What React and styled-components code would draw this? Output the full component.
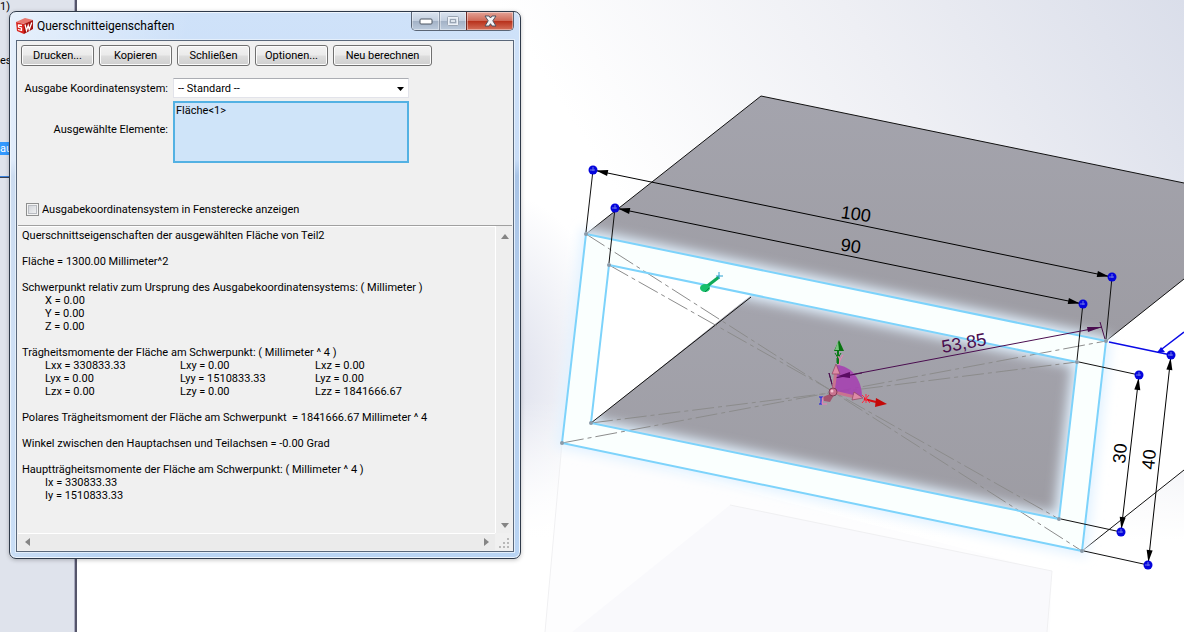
import React from 'react';
import styled, { createGlobalStyle } from 'styled-components';

const GlobalStyle = createGlobalStyle`
  * {
    box-sizing: border-box;
  }
  body {
    margin: 0;
    overflow: hidden;
    font-family: Roboto, 'DejaVu Sans Condensed', sans-serif;
    font-size: 11px;
    line-height: 13px;
    color: #000;
  }
`;

const toolbarButtons = [
  { label: 'Drucken...' },
  { label: 'Kopieren' },
  { label: 'Schließen' },
  { label: 'Optionen...' },
  { label: 'Neu berechnen', wide: true },
];

const inertia = [
  ['Lxx = 330833.33', 'Lxy = 0.00', 'Lxz = 0.00'],
  ['Lyx = 0.00', 'Lyy = 1510833.33', 'Lyz = 0.00'],
  ['Lzx = 0.00', 'Lzy = 0.00', 'Lzz = 1841666.67'],
];

export default function App() {
  return (
    <Desktop>
      <GlobalStyle />
      <TreePanel>
        <TreeItem>1)</TreeItem>
        <TreeItem>es</TreeItem>
        <TreeItem $selected>au</TreeItem>
        <TreeSplit />
      </TreePanel>
      <Viewport>
        <Scene />
      </Viewport>
      <PropertiesWindow />
    </Desktop>
  );
}

function PropertiesWindow() {
  return (
    <Window>
      <TitleBar>
        <Logo />
        <Title>Querschnitteigenschaften</Title>
        <WindowButtons>
          <WindowButton aria-label="Minimieren">
            <svg width="14" height="7" viewBox="0 0 14 7">
              <rect x="1" y="1" width="12" height="5" rx="1" fill="#fff" stroke="#4d5763" />
            </svg>
          </WindowButton>
          <WindowButton aria-label="Maximieren">
            <svg width="12" height="10" viewBox="0 0 12 10">
              <rect x="1.5" y="1.5" width="9" height="7" fill="none" stroke="#eef2f7" strokeWidth="2" />
              <rect x=".5" y=".5" width="11" height="9" rx="1" fill="none" stroke="#9aa5b3" />
              <rect x="3.5" y="3.5" width="5" height="3" fill="#dde4ec" stroke="#9aa5b3" />
            </svg>
          </WindowButton>
          <WindowButton $close aria-label="Fenster schließen">
            <svg width="13" height="12" viewBox="0 0 13 12">
              <path
                d="M1 1h4l1.500 2L8 1h4L8.800 5.800 12 11H8L6.500 8.700 5 11H1l3.200-5.200z"
                fill="#f4f4f6"
                stroke="#4e5360"
                strokeLinejoin="round"
              />
            </svg>
          </WindowButton>
        </WindowButtons>
      </TitleBar>
      <Client>
        <Toolbar>
          {toolbarButtons.map((b) => (
            <ToolButton key={b.label} $wide={b.wide}>
              {b.label}
            </ToolButton>
          ))}
        </Toolbar>
        <Form>
          <FieldLabel htmlFor="csys">Ausgabe Koordinatensystem:</FieldLabel>
          <SelectBox>
            <select id="csys">
              <option>-- Standard --</option>
            </select>
            <svg width="7" height="4" viewBox="0 0 7 4">
              <path d="M0 0h7L3.500 4z" />
            </svg>
          </SelectBox>
          <FieldLabel $tall htmlFor="selection">
            Ausgewählte Elemente:
          </FieldLabel>
          <SelectionBox id="selection" readOnly value="Fläche<1>" />
        </Form>
        <CheckRow>
          <input type="checkbox" />
          Ausgabekoordinatensystem in Fensterecke anzeigen
        </CheckRow>
        <ResultPane>
          <Results />
          <ScrollBar $vertical>
            <Arrow label="Nach oben" points="0,7 4,2 8,7" />
            <Arrow label="Nach unten" points="0,2 8,2 4,7" />
          </ScrollBar>
          <ScrollBar>
            <Arrow label="Nach links" points="6,0 6,8 1,4" />
            <Arrow label="Nach rechts" points="2,0 2,8 7,4" />
          </ScrollBar>
          <Grip viewBox="0 0 12 12">
            <path d="M9 1h2M5 5h2M9 5h2M1 9h2M5 9h2M9 9h2" stroke="#b9b9b9" strokeWidth="2" />
          </Grip>
        </ResultPane>
      </Client>
    </Window>
  );
}

function Results() {
  return (
    <ResultText>
      <p>Querschnittseigenschaften der ausgewählten Fläche von Teil2</p>
      <p>Fläche = 1300.00 Millimeter^2</p>
      <div>
        Schwerpunkt relativ zum Ursprung des Ausgabekoordinatensystems: ( Millimeter )
        <Values>
          <li>X = 0.00</li>
          <li>Y = 0.00</li>
          <li>Z = 0.00</li>
        </Values>
      </div>
      <div>
        Trägheitsmomente der Fläche am Schwerpunkt: ( Millimeter ^ 4 )
        <Tensor>
          <tbody>
            {inertia.map((row) => (
              <tr key={row[0]}>
                {row.map((cell) => (
                  <td key={cell}>{cell}</td>
                ))}
              </tr>
            ))}
          </tbody>
        </Tensor>
      </div>
      <p>Polares Trägheitsmoment der Fläche am Schwerpunkt&nbsp; = 1841666.67 Millimeter ^ 4</p>
      <p>Winkel zwischen den Hauptachsen und Teilachsen = -0.00 Grad</p>
      <div>
        Hauptträgheitsmomente der Fläche am Schwerpunkt: ( Millimeter ^ 4 )
        <Values>
          <li>Ix = 330833.33</li>
          <li>Iy = 1510833.33</li>
        </Values>
      </div>
    </ResultText>
  );
}

function Arrow({ label, points }) {
  return (
    <ArrowButton aria-label={label}>
      <svg width="8" height="8" viewBox="0 0 8 8">
        <polygon points={points} fill="#858585" />
      </svg>
    </ArrowButton>
  );
}

function Logo() {
  return (
    <svg width="17" height="16" viewBox="0 0 17 16">
      <path d="M0 4L9 0l8 2-8 4z" fill="#e8776e" />
      <path d="M0 4l8 2v10l-7-3z" fill="#d8221c" />
      <path d="M8 6l9-4v9l-9 5z" fill="#a5120f" />
      <path d="M6 7.500L2.500 7v2l3 1v2.500L2 11.500" fill="none" stroke="#fff" strokeWidth="1.300" />
      <path d="M9 6.500l1.500 6 1.700-5 1 4 2.600-7" fill="none" stroke="#fff" strokeWidth="1.300" />
    </svg>
  );
}

// Bemaßungslinie mit Pfeilspitzen und blauen Griffpunkten
function Dimension({ from, to }) {
  const [x1, y1] = from;
  const [x2, y2] = to;
  const angle = (Math.atan2(y2 - y1, x2 - x1) * 180) / Math.PI;
  return (
    <g>
      <line x1={x1} y1={y1} x2={x2} y2={y2} stroke="#000" />
      <path d="M3 0l12-3v6z" transform={`translate(${x1} ${y1}) rotate(${angle})`} />
      <path d="M3 0l12-3v6z" transform={`translate(${x2} ${y2}) rotate(${angle + 180})`} />
      <Handle x={x1} y={y1} />
      <Handle x={x2} y={y2} />
    </g>
  );
}

function Handle({ x, y }) {
  return (
    <g transform={`translate(${x} ${y})`}>
      <circle r="4.500" fill="#0505dc" />
      <path d="M-3 0h5M0-3v4" stroke="#6f78e8" />
    </g>
  );
}

function Scene() {
  const outer = '586,234 1106,341 1082,551 562,443';
  const inner = '609,265 1077,362 1059,519 591,423';
  const ring = 'M586 234L1106 341 1082 551 562 443zM609 265L591 423 1059 519 1077 362z';
  return (
    <SceneSvg viewBox="77 0 1107 632" preserveAspectRatio="xMinYMin slice">
      <defs>
        <linearGradient id="sky" x1="0.450" y1="0.200" x2="1" y2="0">
          <stop offset="0" stopColor="#fff" />
          <stop offset="0.500" stopColor="#eeeff4" />
          <stop offset="1" stopColor="#dadeea" />
        </linearGradient>
        <radialGradient id="haze">
          <stop offset="0" stopColor="#d9dcea" />
          <stop offset="1" stopColor="#d9dcea" stopOpacity="0" />
        </radialGradient>
        <linearGradient id="floor" x1="0" y1="0" x2="0" y2="1">
          <stop offset="0" stopColor="#fff" stopOpacity="0" />
          <stop offset="1" stopColor="#fff" />
        </linearGradient>
        <linearGradient id="top" x1="0" y1="0" x2="0" y2="1">
          <stop offset="0" stopColor="#a4a4ad" />
          <stop offset="1" stopColor="#9d9ca3" />
        </linearGradient>
        <filter id="glow" x="-10%" y="-10%" width="120%" height="120%">
          <feGaussianBlur stdDeviation="6" />
        </filter>
      </defs>

      <rect x="77" width="1107" height="632" fill="url(#sky)" />
      <ellipse cx="490" cy="380" rx="130" ry="190" fill="url(#haze)" />
      <rect x="77" y="400" width="1107" height="140" fill="url(#floor)" />
      <rect x="77" y="540" width="1107" height="92" fill="#fff" />

      <path d="M562 443L545 632h505l2-60z" fill="#fdfdfe" />
      <path d="M730 505L1052 571 1047 632H572z" fill="#f9f9fc" />
      <path d="M562 443L545 632M730 505L1052 571 1047 632" fill="none" stroke="#f0f0f2" />

      <path d="M1106 341L1184 279V470L1082 551z" fill="#fff" />
      <path d="M761 96L1184 183V279L1106 341 586 234z" fill="url(#top)" />
      <path d="M586 234L761 96 1184 183M1184 279L1106 341M1082 551L1184 470" fill="none" stroke="#111" />

      <polygon points={inner} fill="#fff" />
      <path d="M751 295L1077 362 1059 519 591 423z" fill="url(#top)" />

      <path d={ring} fill="#e2f2ff" stroke="#e2f2ff" strokeWidth="10" fillRule="evenodd" filter="url(#glow)" />
      <path d={ring} fill="#fafffe" fillRule="evenodd" />
      <path d="M609 265L751 295 591 423z" fill="#fff" />
      <path d="M751 297L591 423" stroke="#111" />

      <g stroke="#8c8c8c" strokeDasharray="22 4 4 4">
        <line x1="586" y1="234" x2="1082" y2="551" />
        <line x1="562" y1="443" x2="1106" y2="341" />
        <line x1="609" y1="265" x2="1059" y2="519" />
        <line x1="591" y1="423" x2="1077" y2="362" />
      </g>
      <g fill="none" stroke="#7dd3fb" strokeWidth="2">
        <polygon points={outer} />
        <polygon points={inner} />
      </g>
      <g fill="#8b9aa8">
        {[...outer.split(' '), ...inner.split(' ')].map((p) => {
          const [x, y] = p.split(',');
          return <circle key={p} cx={x} cy={y} r="2" />;
        })}
      </g>

      <g stroke="#111">
        <path d="M593 170L586 232M615 208L609 263M1112 277L1106 339M1083 303L1077 360" />
        <path d="M1079 362L1139 375M1061 519L1121 532M1084 551L1148 565" />
      </g>
      <path d="M1109 342L1171 355M1158 352L1184 332" stroke="#0a0ae6" strokeWidth="1.500" />
      <path d="M1157 353l4-6 4 5z" fill="#0a0ae6" />
      <Dimension from={[593, 170]} to={[1112, 277]} />
      <Dimension from={[615, 208]} to={[1083, 304]} />
      <Dimension from={[1139, 375]} to={[1121, 532]} />
      <Dimension from={[1171, 355]} to={[1148, 565]} />

      <g stroke="#4a0d4f" fill="#4a0d4f">
        <path d="M834 378L1102 327M1100 322L1105 339M829 373L834 392" fill="none" />
        <path d="M1102 327l-15 0 1 5zM838 377l11-5 1 6z" stroke="none" />
      </g>

      <DimText transform="translate(855 220) rotate(8)">100</DimText>
      <DimText transform="translate(850 252) rotate(8)">90</DimText>
      <DimText $purple transform="translate(965 349) rotate(-10)">
        53,85
      </DimText>
      <DimText transform="translate(1126 454) rotate(-84)">30</DimText>
      <DimText transform="translate(1155 460) rotate(-84)">40</DimText>

      <g>
        <path d="M706 287L719 277" stroke="#0faa58" strokeWidth="3" />
        <path d="M716 276h7M719 272v7" stroke="#2a9fd0" />
        <ellipse cx="705" cy="288" rx="5" ry="4" fill="#17c06b" />
        <path d="M705 292l4-4" stroke="#0b8545" />
      </g>

      <Triad />
    </SceneSvg>
  );
}

function Triad() {
  return (
    <g>
      <path d="M833 393L837 365C851 366 862 379 862 397z" fill="#a63cb2" fillOpacity=".85" />
      <path d="M829 373L832 384M834 378L862 373" stroke="#4a0d4f" />
      <path d="M838 376l12-4v6z" fill="#5a0b62" />
      <path d="M838 364v-15" stroke="#0a7a18" strokeWidth="2" />
      <path d="M834 351l5-11 5 11z" fill="#07740f" />
      <path d="M838 341l-3 9h4z" fill="#7bc483" />
      <path d="M835 353l3 5 3-5M837 358v5" fill="none" stroke="#0a7a18" />
      <path d="M838 356l2 4 3-5M840 360l-1 5" fill="none" stroke="#f07fb4" />
      <path d="M864 399L876 402" stroke="#d60c12" strokeWidth="2" />
      <path d="M875 407l1-9 11 6z" fill="#c40808" />
      <path d="M862 395l8 8M869 395l-7 8M866 394v9" stroke="#ff2a40" />
      <path d="M833 392L836 371" stroke="#c9738f" strokeWidth="3" />
      <path d="M832 374l4-10 4 10z" fill="#dd8ba6" stroke="#8e4560" strokeWidth=".7" />
      <path d="M834 392L855 397" stroke="#c9738f" strokeWidth="3" />
      <path d="M852 400l2-8 9 6z" fill="#dd8ba6" stroke="#8e4560" strokeWidth=".7" />
      <path d="M832 393l-9 4 1 4 6 1 4-7z" fill="#a3536e" />
      <circle cx="833" cy="392" r="4" fill="#c9738f" stroke="#6f3149" strokeWidth=".8" />
      <circle cx="832" cy="391" r="1.500" fill="#f3c1d0" />
      <path d="M819 397h4M821 397v7M819 404h3" stroke="#1a1ae0" fill="none" />
      <path d="M823 397l-1 7h5" stroke="#f07fb4" fill="none" />
    </g>
  );
}

const Desktop = styled.main`
  position: relative;
  display: flex;
  min-height: 100vh;
  background: #fff;
`;

const TreePanel = styled.aside`
  display: flex;
  flex-direction: column;
  gap: 41px;
  width: 77px;
  background: #dfe3ec;
  border-right: 2px solid #55556a;
  box-shadow: inset -1px 0 #a9abc0;
`;

const TreeItem = styled.div`
  height: 13px;
  color: ${(p) => (p.$selected ? '#fff' : '#000')};
  background: ${(p) => (p.$selected ? '#3399ff' : 'transparent')};
  margin-top: ${(p) => (p.$selected ? '34px' : '0')};
`;

const TreeSplit = styled.hr`
  width: 100%;
  margin: -20px 0 0;
  border: 0;
  border-top: 1px solid #3d84de;
  border-bottom: 1px solid #3c4254;
`;

const Viewport = styled.section`
  flex: 1;
  display: flex;
  min-width: 0;
`;

const SceneSvg = styled.svg`
  width: 100%;
  height: 100vh;
`;

const DimText = styled.text`
  font-family: 'Liberation Sans', Arial, sans-serif;
  font-size: 18px;
  text-anchor: middle;
  fill: ${(p) => (p.$purple ? '#4a0d4f' : '#000')};
`;

const Window = styled.section`
  position: absolute;
  left: 9px;
  top: 11px;
  width: 512px;
  padding: 0 6px 6px;
  border: 1px solid #2f3a4a;
  border-radius: 7px;
  background:
    linear-gradient(100deg, rgba(255, 255, 255, 0.5), rgba(255, 255, 255, 0) 30%),
    linear-gradient(180deg, #cfe2f9 0, #c9ddf7 27%, #a9c4e6 30%, #b7d0ef 60%, #b9d4f3 100%);
  box-shadow: inset 0 0 0 1px #eef5fd, 0 1px 4px rgba(0, 0, 0, 0.25);
`;

const TitleBar = styled.header`
  display: flex;
  align-items: center;
  gap: 4px;
  height: 28px;
`;

const Title = styled.h1`
  flex: 1;
  margin: 0;
  font-size: 12px;
  font-weight: 400;
`;

const WindowButtons = styled.div`
  display: flex;
  align-self: flex-start;
  border: 1px solid #5a6575;
  border-top: 0;
  border-radius: 0 0 5px 5px;
  overflow: hidden;
`;

const WindowButton = styled.button`
  display: grid;
  place-items: center;
  width: ${(p) => (p.$close ? '47px' : '27px')};
  height: 18px;
  padding: 0;
  border: 0;
  border-left: ${(p) => (p.$close ? '1px solid #6d2a26' : '0')};
  box-shadow: inset 0 0 0 1px rgba(255, 255, 255, 0.4);
  background: ${(p) =>
    p.$close
      ? 'linear-gradient(#e3a397, #cf6a58 48%, #b8321c 52%, #d4705a)'
      : 'linear-gradient(#dbe4ef, #c3cfdf 48%, #a3b2c6 52%, #bccbdd)'};

  & + &:not(:last-child) {
    border-left: 1px solid #8a95a5;
  }
`;

const Client = styled.div`
  border: 1px solid #59677a;
  box-shadow: 0 0 0 1px #e4effb;
  padding: 4px 1px 1px;
  background: #f0f0f0;
`;

const Toolbar = styled.div`
  display: flex;
  gap: 5px;
  padding: 0 3px;
`;

const ToolButton = styled.button`
  width: ${(p) => (p.$wide ? '99px' : '73px')};
  height: 21px;
  padding: 0;
  border: 1px solid #707070;
  border-radius: 3px;
  box-shadow: inset 0 0 0 1px #fcfcfc;
  background: linear-gradient(#f2f2f2, #ebebeb 48%, #dddddd 52%, #cfcfcf);
  font: inherit;
  color: #000;
`;

const Form = styled.div`
  display: grid;
  grid-template-columns: 150px 236px;
  column-gap: 5px;
  row-gap: 3px;
  align-items: center;
  padding-top: 12px;
`;

const FieldLabel = styled.label`
  padding-bottom: ${(p) => (p.$tall ? '6px' : '0')};
  text-align: right;
  white-space: nowrap;
`;

const SelectBox = styled.div`
  position: relative;

  select {
    display: block;
    width: 100%;
    height: 20px;
    padding: 0 4px;
    border: 1px solid #e2e3ea;
    border-top-color: #abadb3;
    border-radius: 0;
    appearance: none;
    background: #fff;
    font: inherit;
    color: #000;
  }
  svg {
    position: absolute;
    right: 5px;
    top: 9px;
    pointer-events: none;
  }
`;

const SelectionBox = styled.textarea`
  display: block;
  width: 100%;
  height: 62px;
  padding: 1px;
  border: 2px solid #53b1e3;
  outline: 0;
  resize: none;
  background: #cfe4f9;
  font: inherit;
  color: #000;
`;

const CheckRow = styled.label`
  display: flex;
  align-items: center;
  gap: 3px;
  padding: 40px 8px 9px;

  input {
    width: 13px;
    height: 13px;
    margin: 0;
    appearance: none;
    border: 1px solid #8e8f8f;
    box-shadow: inset 0 0 0 1px #f4f4f4, inset 0 0 0 2px #b9bcc2;
    background: linear-gradient(135deg, #cbcfd5, #f6f6f6);
  }
`;

const ResultPane = styled.div`
  display: grid;
  grid-template-columns: 1fr 17px;
  grid-template-rows: 1fr 17px;
  border-top: 1px solid #a0a0a0;
  box-shadow: inset 0 1px #fff;
`;

const ResultText = styled.div`
  display: flex;
  flex-direction: column;
  gap: 13px;
  min-height: 307px;
  padding: 3px 4px;

  p {
    margin: 0;
  }
`;

const Values = styled.ul`
  margin: 0;
  padding: 0 0 0 23px;
  list-style: none;
`;

const Tensor = styled.table`
  width: 405px;
  margin-left: 23px;
  border-collapse: collapse;
  table-layout: fixed;

  td {
    padding: 0;
  }
`;

const ScrollBar = styled.div`
  display: flex;
  flex-direction: ${(p) => (p.$vertical ? 'column' : 'row')};
  justify-content: space-between;
  border-left: ${(p) => (p.$vertical ? '1px solid #fff' : '0')};
  border-top: ${(p) => (p.$vertical ? '0' : '1px solid #fff')};
  padding: ${(p) => (p.$vertical ? '2px 0 0' : '0 1px')};
  background: ${(p) => (p.$vertical ? '#eeeeee' : '#ebebeb')};
`;

const ArrowButton = styled.button`
  display: grid;
  place-items: center;
  width: 17px;
  height: 16px;
  padding: 0;
  border: 0;
  background: transparent;
`;

const Grip = styled.svg`
  align-self: end;
  justify-self: center;
  width: 12px;
  height: 12px;
`;
